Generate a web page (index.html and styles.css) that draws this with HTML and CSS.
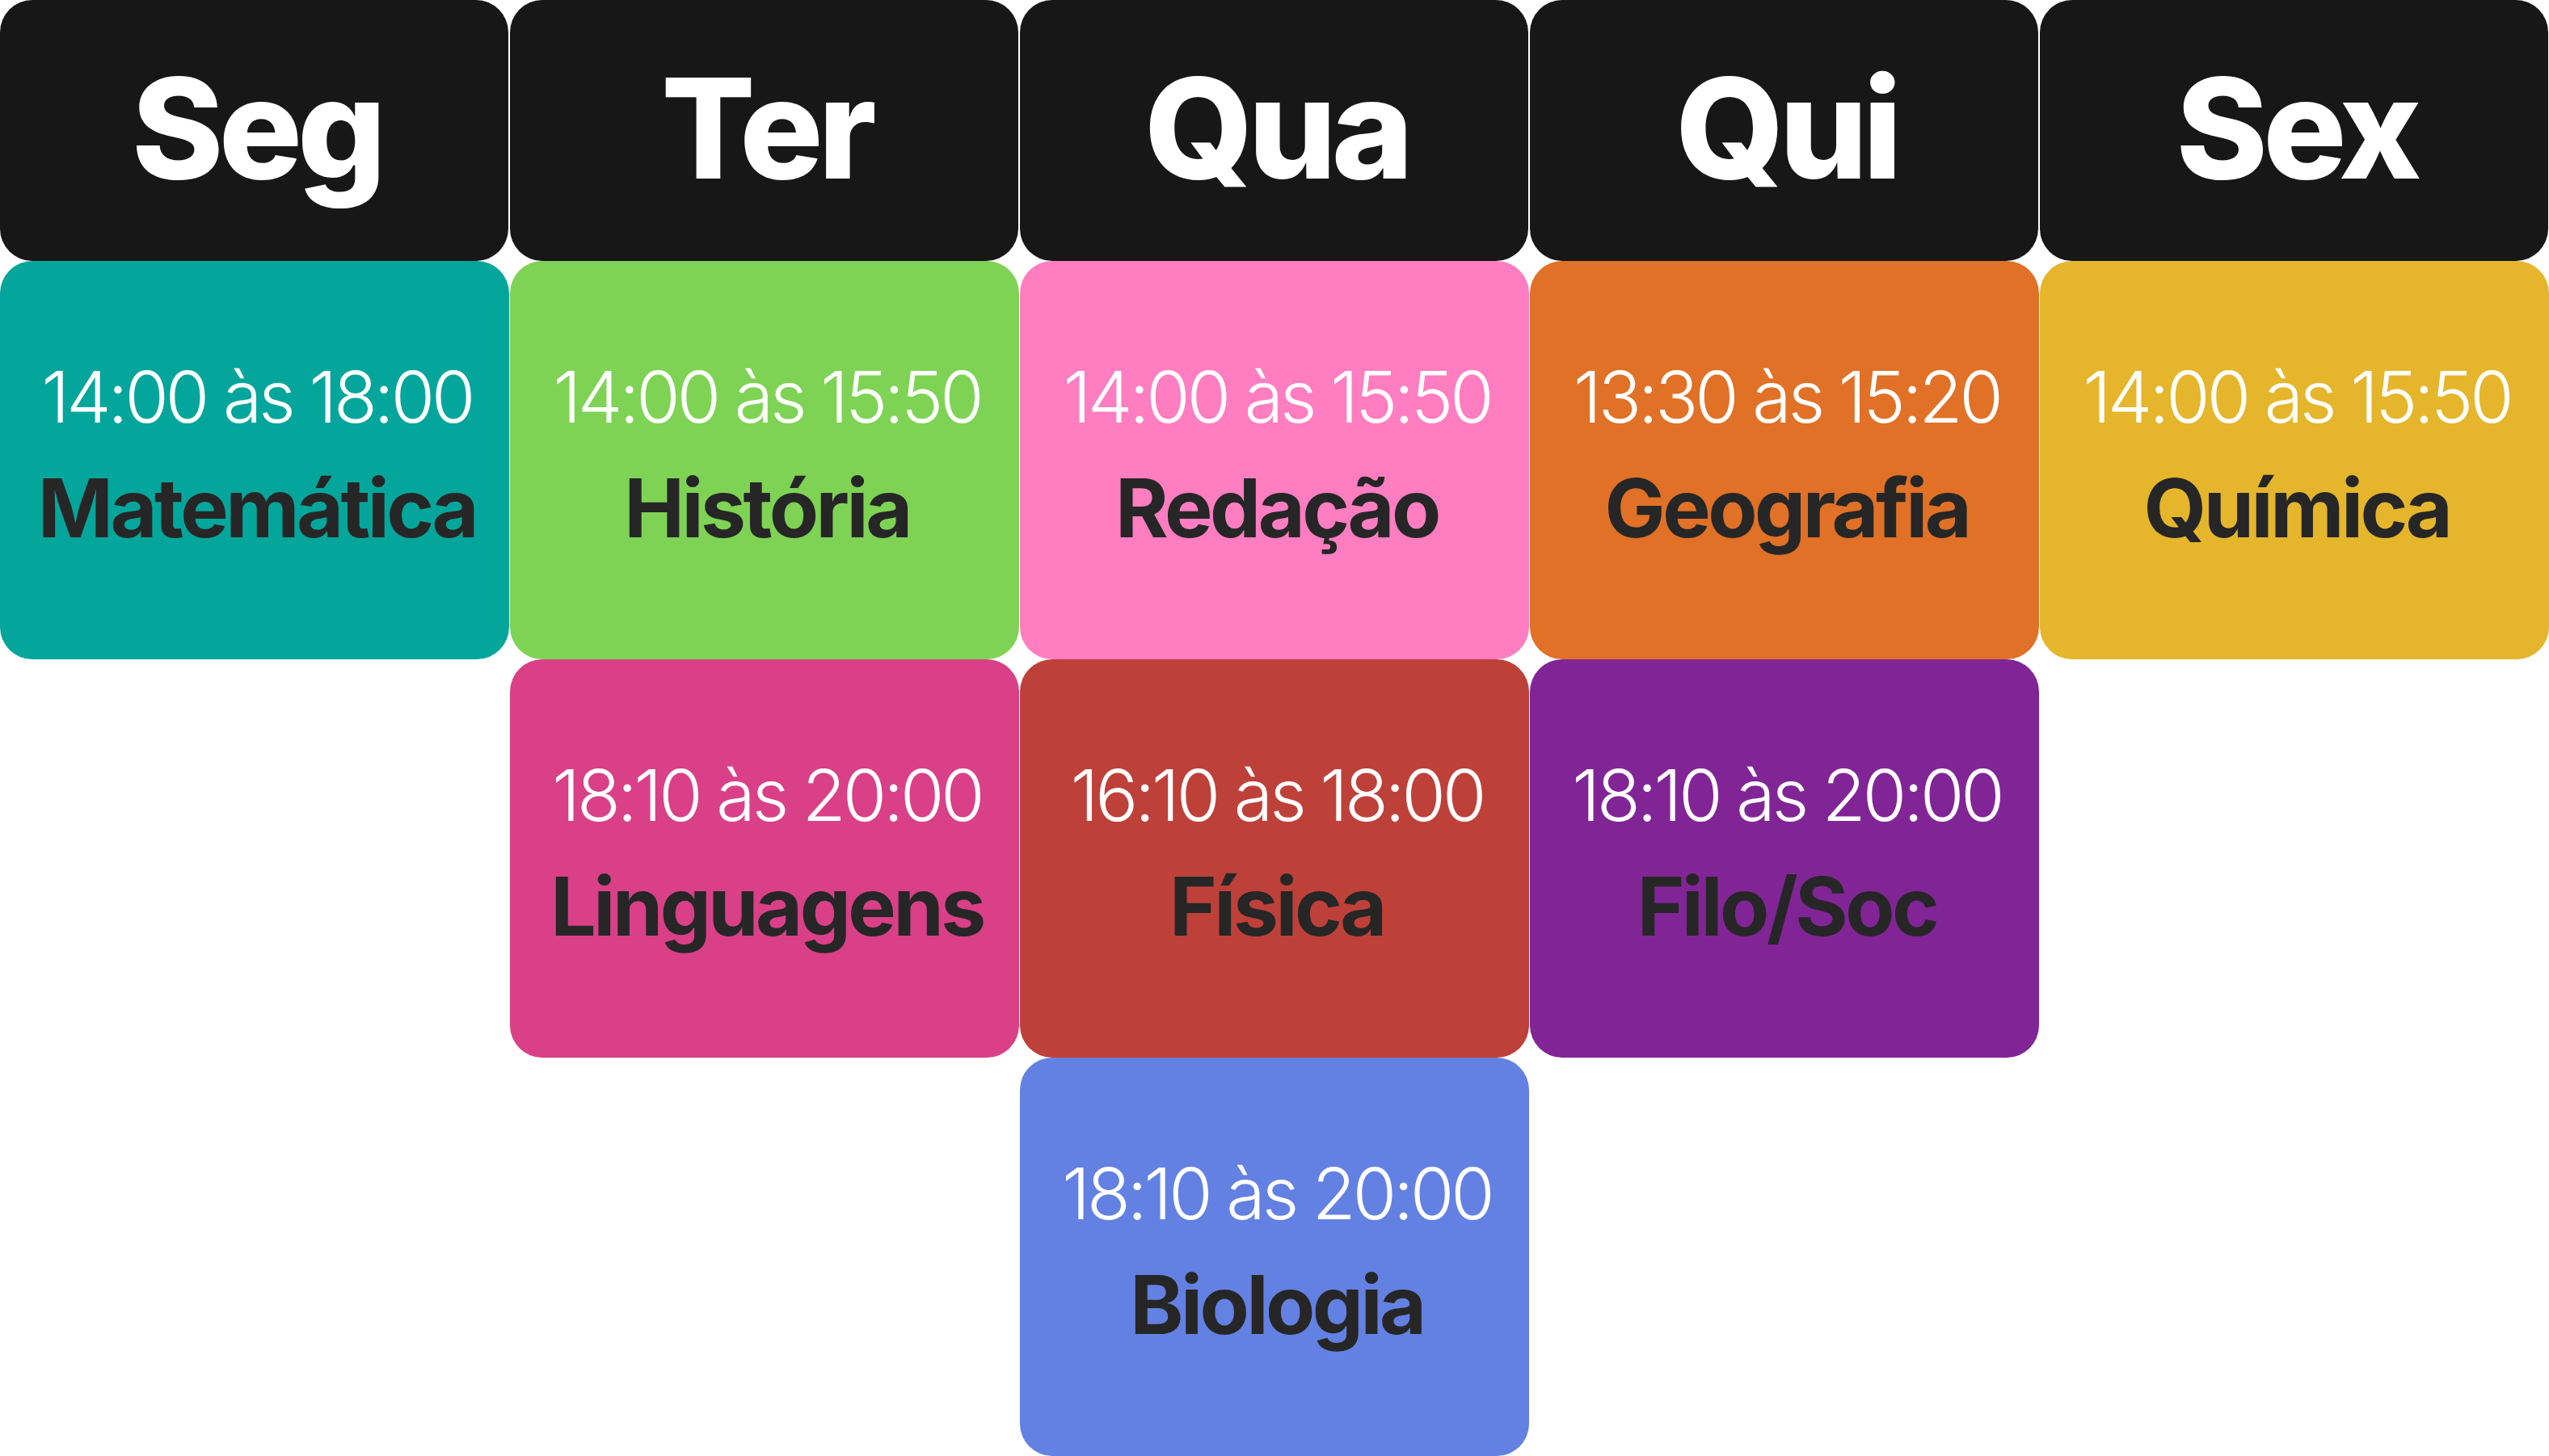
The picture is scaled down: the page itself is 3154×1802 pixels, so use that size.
FILE: index.html
```html
<!DOCTYPE html>
<html lang="pt-BR">
<head>
<meta charset="utf-8">
<title>Horário</title>
<link rel="stylesheet" href="styles.css">
</head>
<body>
<main class="schedule">
  <section class="day">
    <h2 class="day-head">Seg</h2>
    <div class="slot teal"><span class="time">14:00 às 18:00</span><span class="subject">Matemática</span></div>
  </section>
  <section class="day">
    <h2 class="day-head">Ter</h2>
    <div class="slot green"><span class="time">14:00 às 15:50</span><span class="subject">História</span></div>
    <div class="slot magenta"><span class="time">18:10 às 20:00</span><span class="subject">Linguagens</span></div>
  </section>
  <section class="day">
    <h2 class="day-head">Qua</h2>
    <div class="slot pink"><span class="time">14:00 às 15:50</span><span class="subject">Redação</span></div>
    <div class="slot red"><span class="time">16:10 às 18:00</span><span class="subject">Física</span></div>
    <div class="slot blue"><span class="time">18:10 às 20:00</span><span class="subject">Biologia</span></div>
  </section>
  <section class="day">
    <h2 class="day-head">Qui</h2>
    <div class="slot orange"><span class="time">13:30 às 15:20</span><span class="subject">Geografia</span></div>
    <div class="slot purple"><span class="time">18:10 às 20:00</span><span class="subject">Filo/Soc</span></div>
  </section>
  <section class="day">
    <h2 class="day-head">Sex</h2>
    <div class="slot yellow"><span class="time">14:00 às 15:50</span><span class="subject">Química</span></div>
  </section>
</main>
</body>
</html>
```
FILE: styles.css
```css
html, body {
  margin: 0;
  padding: 0;
  background: #ffffff;
}
body {
  font-family: Inter, "Noto Sans", sans-serif;
  width: 3154px;
  height: 1802px;
  overflow: hidden;
}
.schedule {
  display: grid;
  grid-template-columns: repeat(5, 1fr);
  column-gap: 1px;
  align-items: start;
}
.day {
  display: flex;
  flex-direction: column;
}
.day-head {
  margin: 0 1px 0 0;
  height: 323px;
  background: #171717;
  border-radius: 40px;
  color: #ffffff;
  font-size: 172px;
  font-weight: 800;
  letter-spacing: -6px;
  display: flex;
  align-items: center;
  justify-content: center;
  padding: 0 0 8px 6px;
  box-sizing: border-box;
}
.slot {
  height: 493px;
  border-radius: 40px;
  display: flex;
  flex-direction: column;
  align-items: center;
  justify-content: center;
  padding: 0 0 6px 6px;
  box-sizing: border-box;
  text-align: center;
}
.time {
  color: #ffffff;
  font-size: 88px;
  font-weight: 300;
  letter-spacing: -4px;
  line-height: 1.2;
}
.subject {
  margin-top: 20px;
  color: #262626;
  font-size: 100px;
  font-weight: 700;
  letter-spacing: -3.5px;
  line-height: 1.3;
}
.teal { background: #04a69c; }
.green { background: #7ed354; }
.magenta { background: #d94087; }
.pink { background: #ff7dc1; }
.red { background: #be4139; }
.blue { background: #6381e2; }
.orange { background: #e07126; }
.purple { background: #812596; }
.yellow { background: #e5b62b; }
```
